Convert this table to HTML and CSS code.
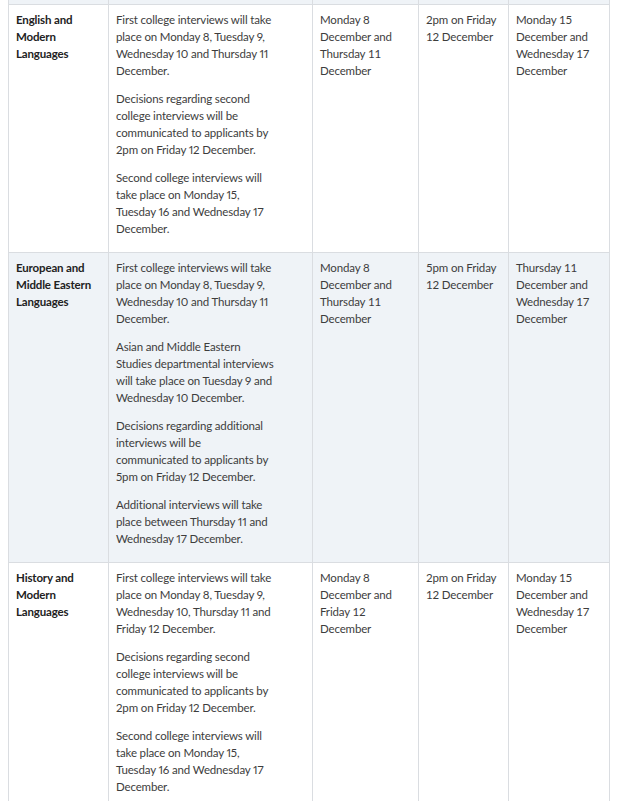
FILE: index.html
```html
<!DOCTYPE html>
<html lang="en">
<head>
<meta charset="utf-8">
<title>Interview dates</title>
<link rel="stylesheet" href="styles.css">
</head>
<body>
<table class="schedule">
  <colgroup>
    <col class="c-course">
    <col class="c-details">
    <col class="c-first">
    <col class="c-decision">
    <col class="c-second">
  </colgroup>
  <tbody>
    <tr class="row shaded stub">
      <td></td><td></td><td></td><td></td><td></td>
    </tr>
    <tr class="row">
      <th class="course">English and Modern Languages</th>
      <td class="details">
        <p>First college interviews will take place on Monday 8, Tuesday 9, Wednesday 10 and Thursday 11 December.</p>
        <p>Decisions regarding second college interviews will be communicated to applicants by 2pm on Friday 12 December.</p>
        <p>Second college interviews will take place on Monday 15, Tuesday 16 and Wednesday 17 December.</p>
      </td>
      <td><p>Monday 8 December and Thursday 11 December</p></td>
      <td><p>2pm on Friday 12 December</p></td>
      <td><p>Monday 15 December and Wednesday 17 December</p></td>
    </tr>
    <tr class="row shaded">
      <th class="course">European and Middle Eastern Languages</th>
      <td class="details">
        <p>First college interviews will take place on Monday 8, Tuesday 9, Wednesday 10 and Thursday 11 December.</p>
        <p>Asian and Middle Eastern Studies departmental interviews will take place on Tuesday 9 and Wednesday 10 December.</p>
        <p>Decisions regarding additional interviews will be communicated to applicants by 5pm on Friday 12 December.</p>
        <p>Additional interviews will take place between Thursday 11 and Wednesday 17 December.</p>
      </td>
      <td><p>Monday 8 December and Thursday 11 December</p></td>
      <td><p>5pm on Friday 12 December</p></td>
      <td><p>Thursday 11 December and Wednesday 17 December</p></td>
    </tr>
    <tr class="row">
      <th class="course">History and Modern Languages</th>
      <td class="details">
        <p>First college interviews will take place on Monday 8, Tuesday 9, Wednesday 10, Thursday 11 and Friday 12 December.</p>
        <p>Decisions regarding second college interviews will be communicated to applicants by 2pm on Friday 12 December.</p>
        <p>Second college interviews will take place on Monday 15, Tuesday 16 and Wednesday 17 December.</p>
      </td>
      <td><p>Monday 8 December and Friday 12 December</p></td>
      <td><p>2pm on Friday 12 December</p></td>
      <td><p>Monday 15 December and Wednesday 17 December</p></td>
    </tr>
  </tbody>
</table>
</body>
</html>
```

FILE: styles.css
```css
html, body {
  background: #ffffff;
}

body {
  margin: 0 8px;
  font-family: Lato, "Open Sans", "Liberation Sans", sans-serif;
  font-size: 11.5px;
  letter-spacing: -0.15px;
  line-height: 17px;
  color: #3d3d3d;
}

.schedule {
  border-collapse: collapse;
  table-layout: fixed;
  width: 601px;
}

.c-course { width: 100px; }
.c-details { width: 204px; }
.c-first { width: 106px; }
.c-decision { width: 90px; }
.c-second { width: 101px; }

.schedule th,
.schedule td {
  border: 1px solid #dadde1;
  vertical-align: top;
  text-align: left;
  padding: 6px 7px 4px 7px;
}

.schedule .details {
  padding-right: 37px;
  font-variant-numeric: proportional-nums;
}

.schedule .course {
  font-weight: 700;
  color: #222222;
}

.schedule p {
  margin: 0 0 11px;
}

.row.shaded th,
.row.shaded td {
  background: #eff3f7;
}

.row.stub td {
  height: 4px;
  padding: 0;
  border-top: none;
}
```
